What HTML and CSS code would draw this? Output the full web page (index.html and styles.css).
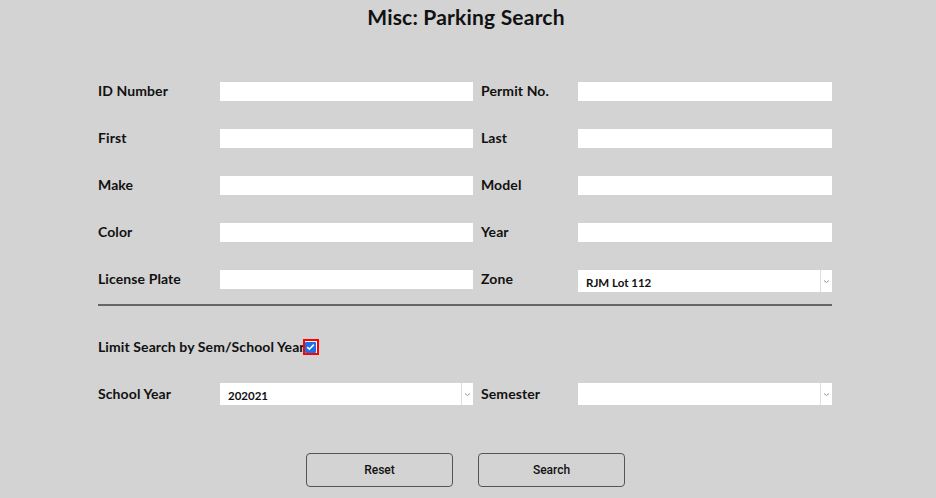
FILE: index.html
```html
<!DOCTYPE html>
<html>
<head>
<meta charset="utf-8">
<link rel="stylesheet" href="styles.css">
</head>
<body>
<div class="page">
  <h1 class="title">Misc: Parking Search</h1>
  <div class="grid">
    <label class="lbl">ID Number</label><div class="inp"></div>
    <label class="lbl lbl-r">Permit No.</label><div class="inp"></div>
    <label class="lbl">First</label><div class="inp"></div>
    <label class="lbl lbl-r">Last</label><div class="inp"></div>
    <label class="lbl">Make</label><div class="inp"></div>
    <label class="lbl lbl-r">Model</label><div class="inp"></div>
    <label class="lbl">Color</label><div class="inp"></div>
    <label class="lbl lbl-r">Year</label><div class="inp"></div>
    <label class="lbl">License Plate</label><div class="inp"></div>
    <label class="lbl lbl-r">Zone</label>
    <div class="sel"><span class="sel-val">RJM Lot 112</span><span class="sel-arrow"><svg width="7" height="5" viewBox="0 0 7 5"><path d="M1 1.5 L3.5 3.5 L6 1.5" fill="none" stroke="#999" stroke-width="1"/></svg></span></div>
  </div>
  <div class="sep"></div>
  <div class="limit">
    <span class="lbl">Limit Search by Sem/School Year</span>
    <span class="cb"><span class="cb-in"><svg width="9" height="8" viewBox="0 0 9 8"><path d="M1.2 4.2 L3.4 6.2 L7.8 1.6" fill="none" stroke="#fff" stroke-width="1.6"/></svg></span></span>
  </div>
  <div class="grid grid2">
    <label class="lbl">School Year</label>
    <div class="sel"><span class="sel-val">202021</span><span class="sel-arrow"><svg width="7" height="5" viewBox="0 0 7 5"><path d="M1 1.5 L3.5 3.5 L6 1.5" fill="none" stroke="#999" stroke-width="1"/></svg></span></div>
    <label class="lbl lbl-r">Semester</label>
    <div class="sel"><span class="sel-val"></span><span class="sel-arrow"><svg width="7" height="5" viewBox="0 0 7 5"><path d="M1 1.5 L3.5 3.5 L6 1.5" fill="none" stroke="#999" stroke-width="1"/></svg></span></div>
  </div>
  <div class="buttons">
    <button class="btn">Reset</button>
    <button class="btn">Search</button>
  </div>
</div>
</body>
</html>
```
FILE: styles.css
```css
html, body {
  margin: 0;
  padding: 0;
  background: #d3d3d3;
}
body {
  width: 936px;
  height: 498px;
  overflow: hidden;
  font-family: "Lato", "DejaVu Sans", sans-serif;
  color: #111;
}
.page {
  padding-left: 98px;
  width: 734px;
}
.title {
  margin: 0;
  padding-top: 5px;
  height: 24px;
  text-align: center;
  font-size: 21px;
  font-weight: 700;
  line-height: 24px;
  width: 734px;
  letter-spacing: 0.2px;
  position: relative;
  left: 1px;
}
.grid {
  display: grid;
  grid-template-columns: 122px 253px 105px 254px;
  grid-auto-rows: 20px;
  row-gap: 27px;
  margin-top: 52px;
  align-items: center;
}
.grid > :nth-child(4n+3) {
  padding-left: 8px;
}
.lbl {
  font-size: 14px;
  font-weight: 700;
  line-height: 16px;
  letter-spacing: 0.1px;
  white-space: nowrap;
}
.inp {
  height: 19px;
  background: #fff;
}
.sel {
  height: 22px;
  background: #fff;
  display: flex;
  align-items: center;
  position: relative;
}
.grid .sel {
  align-self: end;
  margin-bottom: -3px;
}
.sel-val {
  flex: 1;
  font-size: 11.5px;
  font-weight: 700;
  padding-left: 8px;
  padding-top: 2px;
}
.sel-arrow {
  width: 11px;
  height: 22px;
  border-left: 1px solid #ddd;
  display: flex;
  align-items: center;
  justify-content: center;
}
.sep {
  margin-top: 15px;
  height: 2px;
  background: #666;
}
.limit {
  display: flex;
  align-items: center;
  margin-top: 32px;
  height: 18px;
}
.cb {
  width: 12px;
  height: 12px;
  border: 2px solid #f00;
  display: inline-flex;
  align-items: center;
  justify-content: center;
  margin-left: -2px;
  background: #fff;
}
.cb-in {
  width: 11px;
  height: 11px;
  background: #1a6fe8;
  border-radius: 1px;
  display: flex;
  align-items: center;
  justify-content: center;
}
.grid2 {
  margin-top: 27px;
  grid-auto-rows: 22px;
}
.grid2 .sel {
  margin-bottom: 0;
}
.buttons {
  display: flex;
  gap: 25px;
  margin-top: 48px;
  padding-left: 208px;
}
.btn {
  width: 147px;
  height: 34px;
  background: #d3d3d3;
  border: 1px solid #555;
  border-radius: 4px;
  font-family: "Roboto", "Liberation Sans", sans-serif;
  font-weight: 500;
  font-size: 12px;
  color: #111;
  padding: 0;
}
```
